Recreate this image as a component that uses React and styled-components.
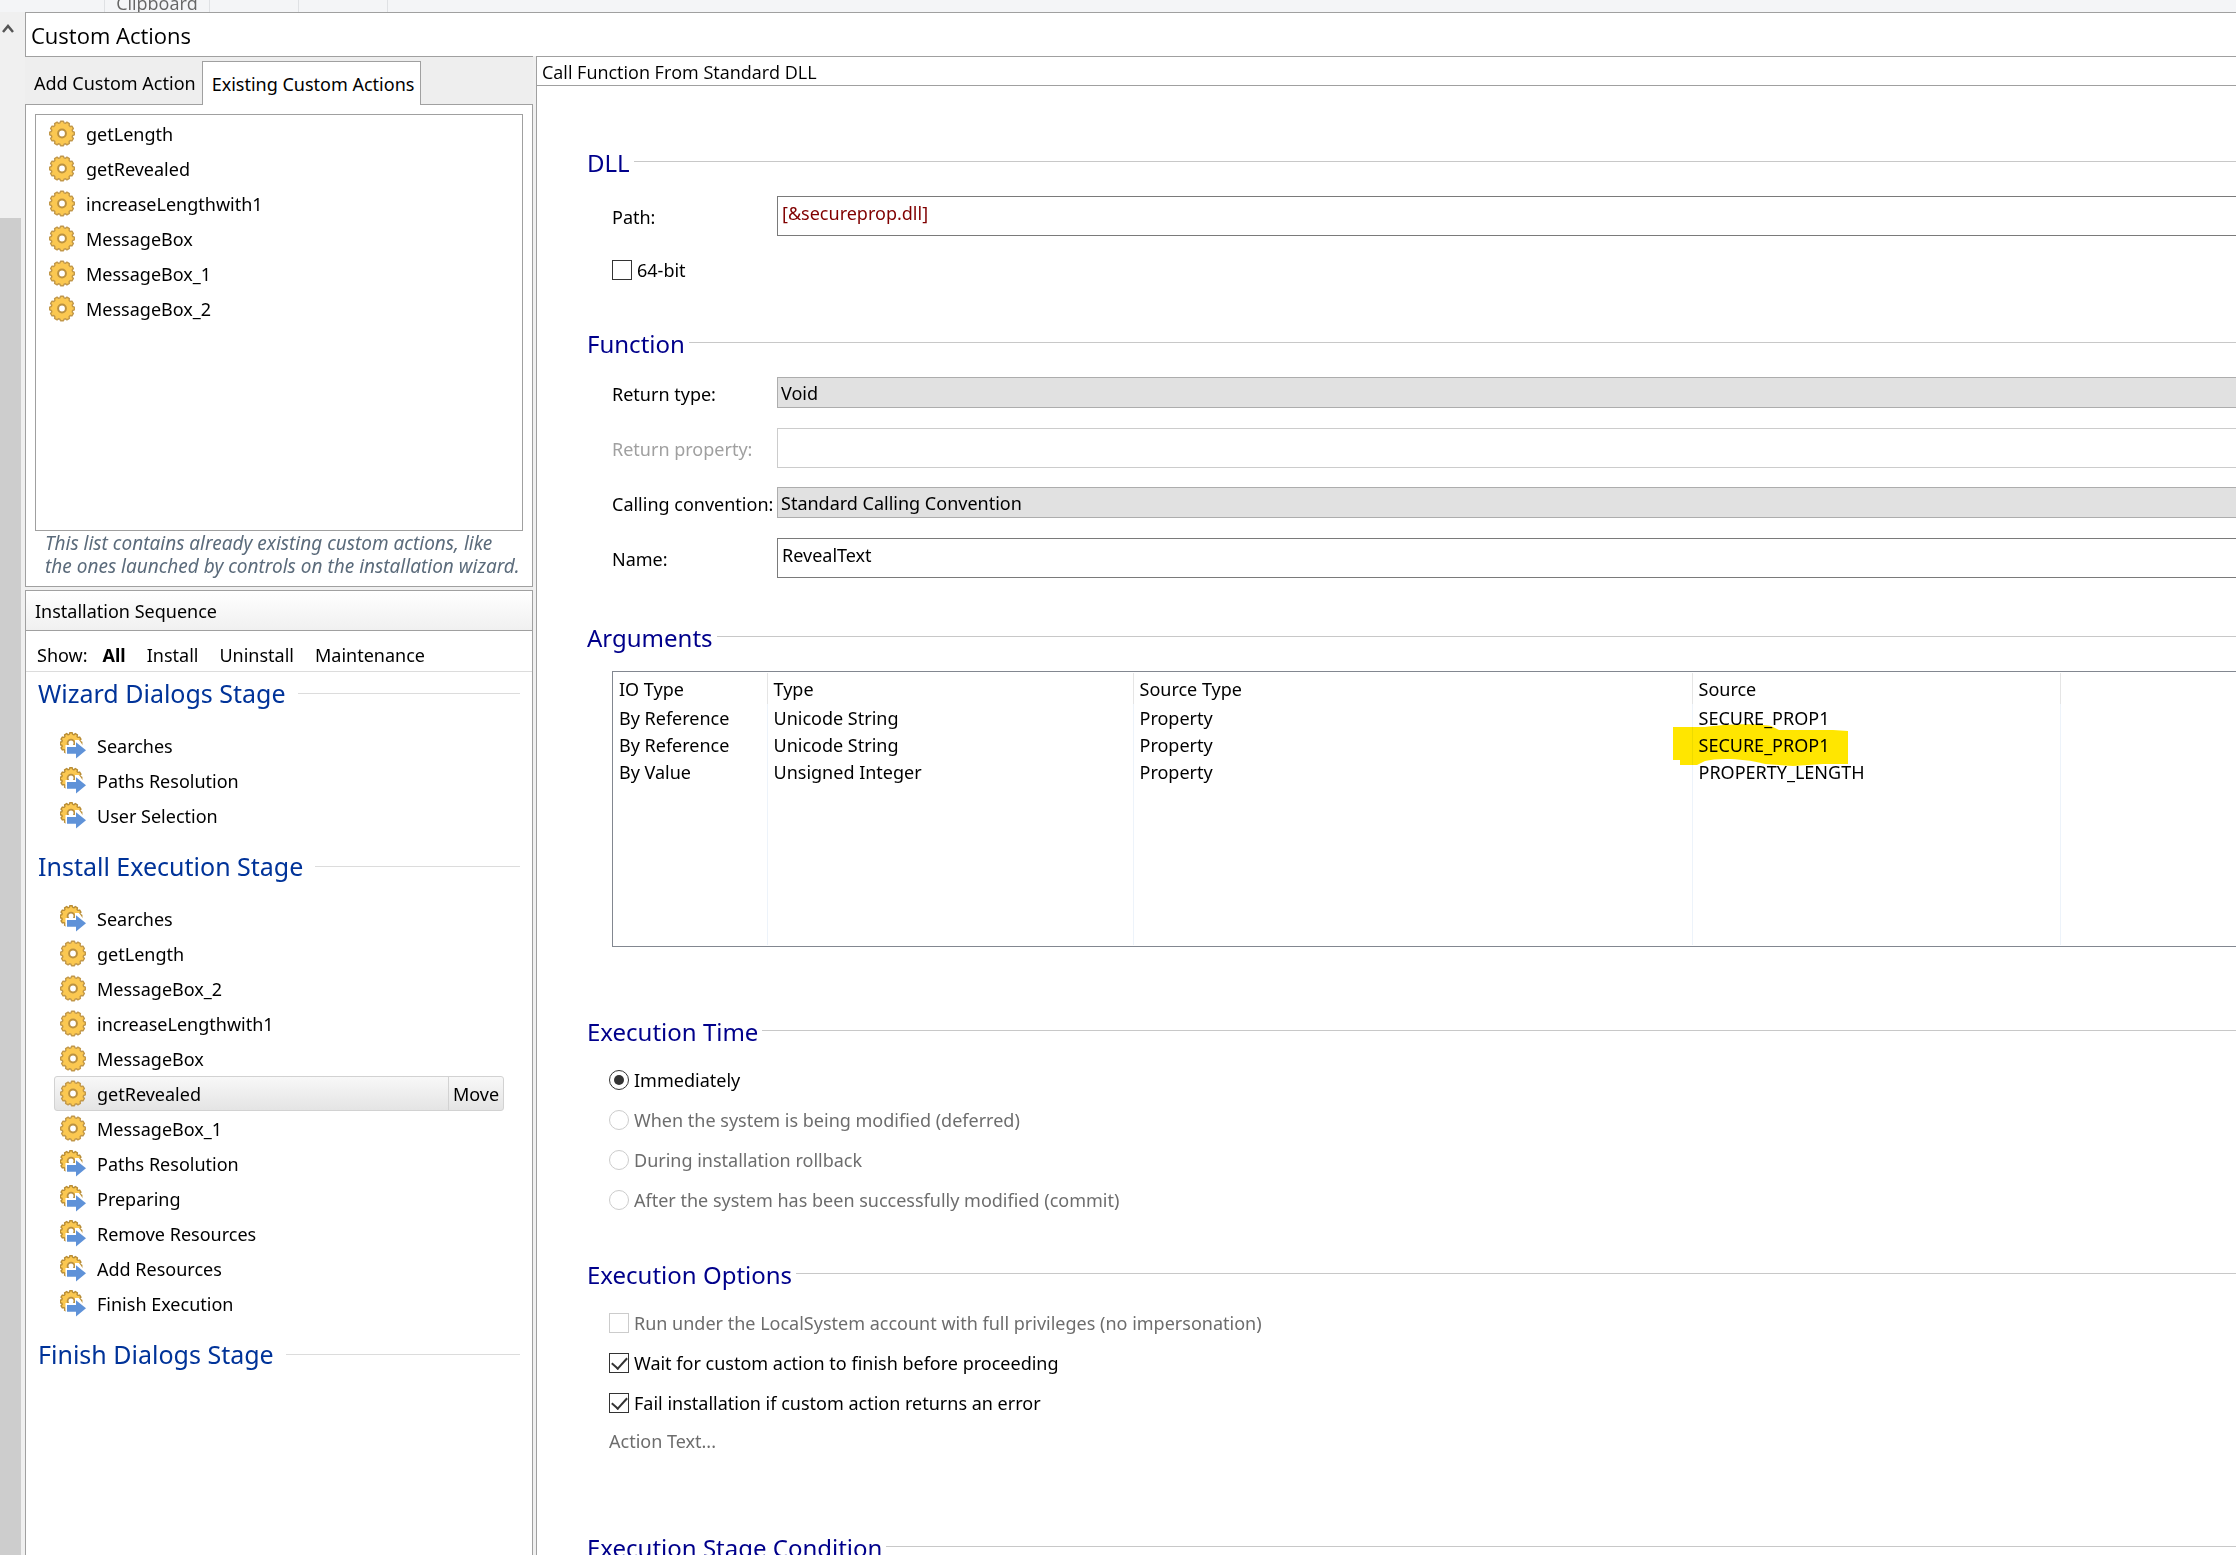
import React, { useState } from 'react';
import styled, { createGlobalStyle } from 'styled-components';

const GlobalStyle = createGlobalStyle`
	* {
		box-sizing: border-box;
	}
	body {
		margin: 0;
		background-color: #f0f0f0;
		font-family: 'Noto Sans', sans-serif;
		font-size: 18px;
		line-height: 24px;
		color: #000;
		overflow: hidden;
	}
	button,
	input,
	select {
		font: inherit;
		color: inherit;
	}
	button {
		border: none;
		background: none;
		padding: 0;
		cursor: pointer;
	}
`;

const Page = styled.div`
	height: 100vh;
	display: flex;
	flex-direction: column;
	overflow: hidden;
`;

const Ribbon = styled.div`
	display: flex;
	flex: none;
	height: 12px;
	padding-left: 104px;
	background-color: #f4f5f7;
	overflow: hidden;
`;

const RibbonGroup = styled.div`
	display: flex;
	align-items: flex-end;
	justify-content: center;
	width: ${(props) => props.$width};
	border-left: 1px solid #dfe1e4;
	font-family: 'Open Sans', sans-serif;
	font-size: 18px;
	line-height: 18px;
	color: #666;
`;

const Workspace = styled.div`
	display: flex;
	flex: 1;
	min-height: 0;
`;

const ScrollTrack = styled.div`
	display: flex;
	flex-direction: column;
	width: 21px;
	margin-right: 4px;
	flex: none;
`;

const ScrollUp = styled.button`
	display: flex;
	justify-content: center;
	height: 206px;
	padding: 10px 6px 0 0;
`;

const ScrollThumb = styled.div`
	flex: 1;
	background-color: #cdcdcd;
`;

const Content = styled.div`
	flex: 1;
	min-width: 0;
	display: flex;
	flex-direction: column;
`;

const TitleBar = styled.h1`
	flex: none;
	margin: 0;
	height: 44px;
	padding: 0 5px;
	border: 1px solid #a0a0a0;
	border-width: 1px 0 0 1px;
	background-color: #fff;
	font-family: 'Open Sans', sans-serif;
	font-size: 22px;
	font-weight: 400;
	line-height: 44px;
`;

const Columns = styled.div`
	display: flex;
	flex: 1;
	gap: 3px;
	min-height: 0;
`;

const Sidebar = styled.div`
	width: 508px;
	flex: none;
	display: flex;
	flex-direction: column;
	border-top: 1px solid #a0a0a0;
`;

const Tabs = styled.div`
	display: flex;
	align-items: flex-end;
	height: 47px;
	padding-top: 4px;
	background-color: #eee;
`;

const Tab = styled.button`
	height: 43px;
	padding: 0 6px 0 9px;
	z-index: 1;
	${(props) =>
		props.$active &&
		`
		height: 44px;
		margin-bottom: -1px;
		border: 1px solid #a0a0a0;
		border-bottom: none;
		background-color: #fff;
	`}
`;

const Panel = styled.section`
	border: 1px solid #a0a0a0;
	background-color: #fff;
`;

const ExistingPanel = styled(Panel)`
	padding: 9px 9px 8px;
	margin-bottom: 3px;
`;

const ActionList = styled.ul`
	height: 417px;
	margin: 0;
	padding: 1px 0 0 13px;
	border: 1px solid #a0a0a0;
	list-style: none;
`;

const ActionButton = styled.button`
	display: flex;
	align-items: center;
	gap: 11px;
	height: 35px;
	width: 100%;
	text-align: left;
`;

const Hint = styled.p`
	margin: 1px 0 0 10px;
	font-size: 19px;
	line-height: 23px;
	font-style: italic;
	color: #5b6b7b;
	white-space: nowrap;
`;

const SequencePanel = styled(Panel)`
	flex: 1;
	border-bottom: none;
`;

const PanelHeader = styled.h2`
	height: 40px;
	margin: 0;
	padding: 0 9px;
	border-bottom: 1px solid #a0a0a0;
	background: linear-gradient(#fff, #f0f0f0);
	font-size: 18px;
	font-weight: 400;
	line-height: 40px;
`;

const FilterBar = styled.div`
	display: flex;
	align-items: center;
	height: 41px;
	padding: 8px 11px 0;
	gap: 21px;
	border-bottom: 1px solid #dcdcdc;
`;

const FilterLabel = styled.span`
	margin-right: -6px;
`;

const FilterButton = styled.button`
	font-weight: ${(props) => (props.$active ? 700 : 400)};
`;

const StageHeading = styled.h3`
	display: flex;
	align-items: center;
	gap: 12px;
	height: 42px;
	margin: 0;
	padding: 0 12px;
	font-size: 25px;
	font-weight: 400;
	color: #039;
	&::after {
		content: '';
		flex: 1;
		border-top: 1px solid #dcdcdc;
	}
`;

const StageList = styled.ul`
	margin: 0;
	padding: 14px 28px 12px;
	list-style: none;
`;

const StageRow = styled.li`
	display: flex;
	align-items: center;
	height: 35px;
	padding-left: 5px;
	border: 1px solid ${(props) => (props.$selected ? '#d2d2d2' : 'transparent')};
	border-radius: 3px;
	background: ${(props) =>
		props.$selected ? 'linear-gradient(#f8f8f8, #e4e4e4)' : 'none'};
`;

const MoveButton = styled.button`
	flex: none;
	width: 55px;
	height: 33px;
	border-left: 1px solid #d2d2d2;
`;

const Main = styled.main`
	flex: 1;
	min-width: 0;
	border-left: 1px solid #a0a0a0;
	border-top: 1px solid #a0a0a0;
	background-color: #fff;
	overflow: hidden;
`;

const MainHeader = styled.h2`
	height: 29px;
	margin: 0;
	padding: 0 5px;
	border-bottom: 1px solid #a0a0a0;
	font-family: 'Open Sans', sans-serif;
	font-size: 18px;
	font-weight: 400;
	line-height: 30px;
`;

const Sections = styled.div`
	padding: 60px 0 0 50px;
`;

const Section = styled.section`
	padding-bottom: ${(props) => props.$after || '0'};
`;

const SectionHeading = styled.h3`
	display: flex;
	gap: 4px;
	height: 34px;
	margin: 0;
	font-size: 24px;
	font-weight: 400;
	line-height: 34px;
	color: #00008b;
	&::after {
		content: '';
		flex: 1;
		margin-top: 15px;
		border-top: 1px solid #c8c8c8;
	}
`;

const SectionBody = styled.div`
	padding: ${(props) => props.$top || '4px'} 0 0 ${(props) => props.$left || '25px'};
`;

const Field = styled.div`
	display: grid;
	grid-template-columns: 165px 1fr;
	align-items: center;
	height: 55px;
`;

const FieldLabel = styled.label`
	padding-top: 2px;
	white-space: nowrap;
	color: ${(props) => (props.$muted ? '#a0a0a0' : '#000')};
`;

const TextBox = styled.input`
	height: 40px;
	width: 100%;
	padding: 0 4px 6px;
	border: 1px solid #7a7a7a;
	border-right: none;
	background-color: #fff;
	color: ${(props) => props.$color || '#000'};
	outline: none;
	&:disabled {
		border-color: #ccc;
	}
`;

const Dropdown = styled.select`
	appearance: none;
	height: 31px;
	width: 100%;
	padding: 0 3px;
	border: 1px solid #adadad;
	border-right: none;
	border-radius: 0;
	background-color: #e1e1e1;
	outline: none;
`;

const Option = styled.label`
	display: flex;
	align-items: center;
	gap: 5px;
	height: 40px;
	color: ${(props) => (props.$muted ? '#6d6d6d' : '#000')};
`;

const BitnessOption = styled(Option)`
	margin-top: 7px;
`;

const CheckBox = styled.input.attrs({ type: 'checkbox' })`
	appearance: none;
	display: grid;
	place-items: center;
	width: 20px;
	height: 20px;
	margin: 0;
	border: 1px solid #333;
	background-color: #fff;
	&:disabled {
		border-color: #ccc;
	}
	&:checked::after {
		content: '';
		width: 7px;
		height: 13px;
		margin-top: -4px;
		border: solid #333;
		border-width: 0 2px 2px 0;
		transform: rotate(42deg);
	}
`;

const Radio = styled.input.attrs({ type: 'radio' })`
	appearance: none;
	display: grid;
	place-items: center;
	width: 20px;
	height: 20px;
	margin: 0;
	border: 1px solid #333;
	border-radius: 50%;
	background-color: #fff;
	&:disabled {
		border-color: #ccc;
	}
	&:checked::after {
		content: '';
		width: 10px;
		height: 10px;
		border-radius: 50%;
		background-color: #333;
	}
`;

const TableFrame = styled.div`
	display: flex;
	height: 276px;
	padding: 1px 0;
	border: 1px solid #828790;
	border-right: none;
`;

const ArgumentTable = styled.table`
	width: 100%;
	height: 100%;
	table-layout: fixed;
	border-collapse: collapse;
	th,
	td {
		height: 27px;
		padding: 0 6px;
		border-right: 1px solid #edf3fa;
		font-weight: 400;
		text-align: left;
		white-space: nowrap;
	}
	th {
		height: 31px;
		border-color: #e5e5e5;
	}
	th:last-child,
	td:last-child {
		border-right: none;
	}
`;

const FillerRow = styled.tr`
	td {
		height: auto;
	}
`;

const Marked = styled.span`
	position: relative;
`;

// highlighter stroke, the text stays readable through it
const Marker = styled.svg`
	position: absolute;
	left: -26px;
	top: -9px;
	mix-blend-mode: multiply;
	pointer-events: none;
`;

const ActionText = styled.button`
	display: block;
	height: 36px;
	color: #6d6d6d;
`;

// outline of a cog wheel with the given number of teeth
const cogPath = (cx, cy, outer, inner, teeth) => {
	const step = (Math.PI * 2) / teeth;
	const point = (radius, angle) =>
		`${(cx + radius * Math.sin(angle)).toFixed(2)} ${(cy - radius * Math.cos(angle)).toFixed(2)}`;
	let d = '';
	for (let i = 0; i < teeth; i++) {
		const a = i * step;
		d += `${i ? 'L' : 'M'}${point(outer, a - step * 0.22)}`;
		d += `L${point(outer, a + step * 0.22)}`;
		d += `L${point(inner, a + step * 0.36)}`;
		d += `L${point(inner, a + step * 0.64)}`;
	}
	return `${d}Z`;
};

const CogIcon = () => (
	<svg width="26" height="27" viewBox="0 0 26 27" aria-hidden="true">
		<path
			d={cogPath(13, 13.5, 12.4, 10.8, 12)}
			fill="#fbc851"
			stroke="#c2984a"
			strokeWidth="1.4"
			strokeLinejoin="round"
		/>
		<circle cx="13" cy="13.5" r="3.9" fill="#fff" stroke="#bb9140" strokeWidth="2" />
	</svg>
);

const StepIcon = () => (
	<svg width="26" height="27" viewBox="0 0 26 27" aria-hidden="true">
		<path
			d={cogPath(11, 11.5, 10.8, 9.3, 12)}
			fill="#fbc851"
			stroke="#b98d35"
			strokeWidth="1.4"
			strokeLinejoin="round"
		/>
		<circle cx="11" cy="11" r="3.4" fill="#fff" stroke="#bb9140" strokeWidth="1.8" />
		<path d="M5.500 13H15V8h4l7.500 10.500L17 27H5.500z" fill="#fff" />
		<path d="M7 15h9v-4.800l10 8.100-10 8.200v-4.800H7z" fill="#5f92d8" />
	</svg>
);

const existingActions = [
	'getLength',
	'getRevealed',
	'increaseLengthwith1',
	'MessageBox',
	'MessageBox_1',
	'MessageBox_2',
];

const filters = ['All', 'Install', 'Uninstall', 'Maintenance'];

const stages = [
	{
		title: 'Wizard Dialogs Stage',
		items: [
			{ id: 'w1', name: 'Searches', step: true },
			{ id: 'w2', name: 'Paths Resolution', step: true },
			{ id: 'w3', name: 'User Selection', step: true },
		],
	},
	{
		title: 'Install Execution Stage',
		items: [
			{ id: 'i1', name: 'Searches', step: true },
			{ id: 'i2', name: 'getLength' },
			{ id: 'i3', name: 'MessageBox_2' },
			{ id: 'i4', name: 'increaseLengthwith1' },
			{ id: 'i5', name: 'MessageBox' },
			{ id: 'i6', name: 'getRevealed' },
			{ id: 'i7', name: 'MessageBox_1' },
			{ id: 'i8', name: 'Paths Resolution', step: true },
			{ id: 'i9', name: 'Preparing', step: true },
			{ id: 'i10', name: 'Remove Resources', step: true },
			{ id: 'i11', name: 'Add Resources', step: true },
			{ id: 'i12', name: 'Finish Execution', step: true },
		],
	},
	{ title: 'Finish Dialogs Stage', items: [] },
];

const argumentRows = [
	['By Reference', 'Unicode String', 'Property', 'SECURE_PROP1'],
	['By Reference', 'Unicode String', 'Property', 'SECURE_PROP1'],
	['By Value', 'Unsigned Integer', 'Property', 'PROPERTY_LENGTH'],
];

const executionTimes = [
	'Immediately',
	'When the system is being modified (deferred)',
	'During installation rollback',
	'After the system has been successfully modified (commit)',
];

const SequenceTree = () => {
	const [filter, setFilter] = useState('All');
	const [selected, setSelected] = useState('i6');

	return (
		<SequencePanel>
			<PanelHeader>Installation Sequence</PanelHeader>
			<FilterBar>
				<FilterLabel>Show:</FilterLabel>
				{filters.map((name) => (
					<FilterButton
						key={name}
						$active={name === filter}
						onClick={() => setFilter(name)}
					>
						{name}
					</FilterButton>
				))}
			</FilterBar>
			{stages.map((stage) => (
				<div key={stage.title}>
					<StageHeading>{stage.title}</StageHeading>
					<StageList>
						{stage.items.map((item) => (
							<StageRow key={item.id} $selected={item.id === selected}>
								<ActionButton onClick={() => setSelected(item.id)}>
									{item.step ? <StepIcon /> : <CogIcon />}
									{item.name}
								</ActionButton>
								{item.id === selected && <MoveButton>Move</MoveButton>}
							</StageRow>
						))}
					</StageList>
				</div>
			))}
		</SequencePanel>
	);
};

const Arguments = () => (
	<TableFrame>
		<ArgumentTable>
			<colgroup>
				<col width="154" />
				<col width="366" />
				<col width="559" />
				<col width="368" />
				<col />
			</colgroup>
			<thead>
				<tr>
					<th>IO Type</th>
					<th>Type</th>
					<th>Source Type</th>
					<th>Source</th>
					<th></th>
				</tr>
			</thead>
			<tbody>
				{argumentRows.map((row, index) => (
					<tr key={index}>
						{row.map((cell, column) => (
							<td key={column}>
								{index === 1 && column === 3 ? (
									<Marked>
										{cell}
										<Marker width="176" height="42" viewBox="0 0 176 42">
											<path
												d="M0 3H32C50 0 84 -1 98 2L106 6H160L175 7V40H150L120 42L92 40C70 34 44 34 32 37L24 41H7V36H0Z"
												fill="#ffe600"
											/>
										</Marker>
									</Marked>
								) : (
									cell
								)}
							</td>
						))}
						<td></td>
					</tr>
				))}
				<FillerRow>
					<td></td>
					<td></td>
					<td></td>
					<td></td>
					<td></td>
				</FillerRow>
			</tbody>
		</ArgumentTable>
	</TableFrame>
);

const App = () => {
	const [tab, setTab] = useState('existing');

	return (
		<Page>
			<GlobalStyle />
			<Ribbon>
				<RibbonGroup $width="105px">Clipboard</RibbonGroup>
				<RibbonGroup $width="89px" />
				<RibbonGroup $width="89px" />
				<RibbonGroup $width="89px" />
			</Ribbon>
			<Workspace>
				<ScrollTrack>
					<ScrollUp aria-label="Scroll up">
						<svg width="12" height="14" viewBox="0 0 12 14">
							<path d="M1 10l5-6 5 6" fill="none" stroke="#555" strokeWidth="2.500" />
						</svg>
					</ScrollUp>
					<ScrollThumb />
				</ScrollTrack>
				<Content>
					<TitleBar>Custom Actions</TitleBar>
					<Columns>
						<Sidebar>
							<Tabs role="tablist">
								<Tab role="tab" $active={tab === 'add'} onClick={() => setTab('add')}>
									Add Custom Action
								</Tab>
								<Tab
									role="tab"
									$active={tab === 'existing'}
									onClick={() => setTab('existing')}
								>
									Existing Custom Actions
								</Tab>
							</Tabs>
							<ExistingPanel>
								<ActionList>
									{existingActions.map((name) => (
										<li key={name}>
											<ActionButton>
												<CogIcon />
												{name}
											</ActionButton>
										</li>
									))}
								</ActionList>
								<Hint>
									This list contains already existing custom actions, like
									<br />
									the ones launched by controls on the installation wizard.
								</Hint>
							</ExistingPanel>
							<SequenceTree />
						</Sidebar>
						<Main>
							<MainHeader>Call Function From Standard DLL</MainHeader>
							<Sections>
								<Section $after="37px">
									<SectionHeading>DLL</SectionHeading>
									<SectionBody $top="8px">
										<Field>
											<FieldLabel htmlFor="path">Path:</FieldLabel>
											<TextBox id="path" $color="#800000" defaultValue="[&secureprop.dll]" />
										</Field>
										<BitnessOption>
											<CheckBox />
											64-bit
										</BitnessOption>
									</SectionBody>
								</Section>
								<Section $after="36px">
									<SectionHeading>Function</SectionHeading>
									<SectionBody>
										<Field>
											<FieldLabel htmlFor="returnType">Return type:</FieldLabel>
											<Dropdown id="returnType">
												<option>Void</option>
											</Dropdown>
										</Field>
										<Field>
											<FieldLabel htmlFor="returnProperty" $muted>
												Return property:
											</FieldLabel>
											<TextBox id="returnProperty" disabled />
										</Field>
										<Field>
											<FieldLabel htmlFor="convention">Calling convention:</FieldLabel>
											<Dropdown id="convention">
												<option>Standard Calling Convention</option>
											</Dropdown>
										</Field>
										<Field>
											<FieldLabel htmlFor="name">Name:</FieldLabel>
											<TextBox id="name" defaultValue="RevealText" />
										</Field>
									</SectionBody>
								</Section>
								<Section $after="68px">
									<SectionHeading>Arguments</SectionHeading>
									<SectionBody $top="16px">
										<Arguments />
									</SectionBody>
								</Section>
								<Section $after="38px">
									<SectionHeading>Execution Time</SectionHeading>
									<SectionBody $top="11px" $left="22px">
										{executionTimes.map((text, index) => (
											<Option key={text} $muted={index > 0}>
												<Radio
													name="executionTime"
													defaultChecked={index === 0}
													disabled={index > 0}
												/>
												{text}
											</Option>
										))}
									</SectionBody>
								</Section>
								<Section $after="72px">
									<SectionHeading>Execution Options</SectionHeading>
									<SectionBody $top="11px" $left="22px">
										<Option $muted>
											<CheckBox disabled />
											Run under the LocalSystem account with full privileges (no impersonation)
										</Option>
										<Option>
											<CheckBox defaultChecked />
											Wait for custom action to finish before proceeding
										</Option>
										<Option>
											<CheckBox defaultChecked />
											Fail installation if custom action returns an error
										</Option>
										<ActionText>Action Text...</ActionText>
									</SectionBody>
								</Section>
								<Section>
									<SectionHeading>Execution Stage Condition</SectionHeading>
								</Section>
							</Sections>
						</Main>
					</Columns>
				</Content>
			</Workspace>
		</Page>
	);
};

export default App;
